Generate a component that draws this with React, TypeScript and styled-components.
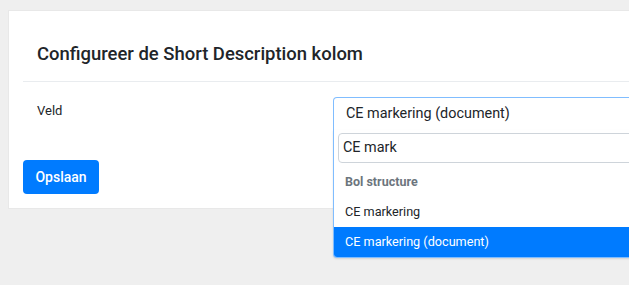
import React from "react";
import styled, { createGlobalStyle } from "styled-components";

const Global = createGlobalStyle`
  html, body { margin: 0; padding: 0; overflow: hidden; background: #efefef; }
  body { font-family: Roboto, "Noto Sans", "Liberation Sans", sans-serif; color: #212529; }
`;

const Page = styled.div`
  padding: 11px 0 0 9px;
  width: 760px;
  height: 285px;
  box-sizing: border-box;
`;

const Card = styled.div`
  background: #fff;
  box-shadow: 0 0 0 1px #e8e8e8;
  width: 680px;
  box-sizing: border-box;
  padding: 0 14px 14px;
`;

const Header = styled.div`
  padding: 32px 14px 16px;
  border-bottom: 1px solid #e9ecef;
`;

const Title = styled.h2`
  margin: 0;
  font-size: 18.45px;
  font-weight: 500;
  line-height: 22px;
  color: #212529;
`;

const FormRow = styled.div`
  display: grid;
  grid-template-columns: 296px 1fr;
  padding: 15px 0 0 14px;
  height: 63px;
`;

const Label = styled.div`
  font-size: 13px;
  line-height: 18px;
  padding-top: 5px;
`;

const SelectWrap = styled.div`
  position: relative;
`;

const SelectBox = styled.div`
  height: 32px;
  border: 1px solid #80bdff;
  border-bottom: none;
  border-radius: 4px 4px 0 0;
  padding: 0 12px;
  font-size: 14.4px;
  line-height: 32px;
  color: #212529;
  background: #fff;
`;

const Dropdown = styled.div`
  position: absolute;
  left: 0;
  right: 0;
  top: 33px;
  background: #fff;
  border: 1px solid #80bdff;
  border-top: none;
  border-radius: 0 0 4px 4px;
  box-shadow: 0 1px 2px rgba(0, 0, 0, 0.12);
  overflow: hidden;
  z-index: 2;
`;

const SearchArea = styled.div`
  padding: 3px 4px 4px 4px;
`;

const SearchInput = styled.div`
  height: 30px;
  box-sizing: border-box;
  border: 1px solid #ced4da;
  border-radius: 4px;
  padding: 0 4px;
  font-size: 14.4px;
  line-height: 28px;
  color: #212529;
`;

const Option = styled.div<{ $group?: boolean; $active?: boolean }>`
  height: 30px;
  line-height: 30px;
  padding: 0 11px;
  font-size: ${(p) => (p.$group ? "12.5px" : "12.65px")};
  font-weight: ${(p) => (p.$group ? 700 : 400)};
  color: ${(p) => (p.$group ? "#6c757d" : p.$active ? "#fff" : "#212529")};
  background: ${(p) => (p.$active ? "#007bff" : "transparent")};
`;

const Button = styled.button`
  display: block;
  height: 34px;
  width: 76px;
  border: none;
  border-radius: 4px;
  background: #007bff;
  color: #fff;
  font-family: Roboto, "Noto Sans", sans-serif;
  font-size: 14px;
  font-weight: 500;
  padding: 0;
`;

export default function App() {
  return (
    <>
      <Global />
      <Page>
        <Card>
          <Header>
            <Title>Configureer de Short Description kolom</Title>
          </Header>
          <FormRow>
            <Label>Veld</Label>
            <SelectWrap>
              <SelectBox>CE markering (document)</SelectBox>
              <Dropdown>
                <SearchArea>
                  <SearchInput>CE mark</SearchInput>
                </SearchArea>
                <Option $group>Bol structure</Option>
                <Option>CE markering</Option>
                <Option $active>CE markering (document)</Option>
              </Dropdown>
            </SelectWrap>
          </FormRow>
          <Button>Opslaan</Button>
        </Card>
      </Page>
    </>
  );
}
